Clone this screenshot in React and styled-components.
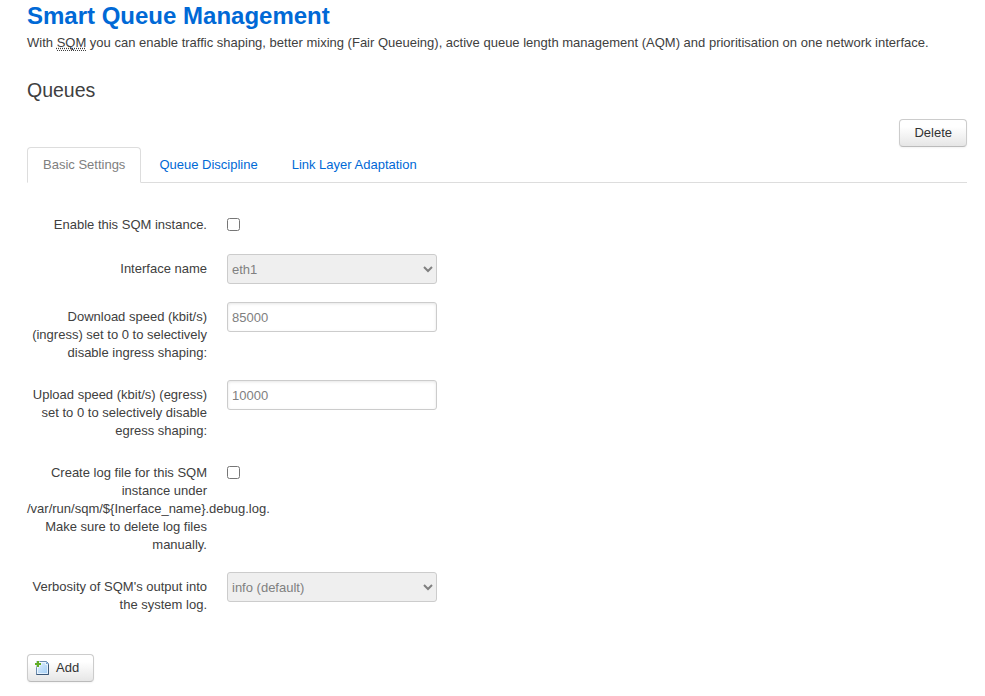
import React from "react";
import styled, { createGlobalStyle } from "styled-components";

const Global = createGlobalStyle`
  * { box-sizing: border-box; }
  body {
    margin: 0;
    background: #fff;
    color: #404040;
    font: 13px/18px "Liberation Sans", Arial, sans-serif;
  }
`;

const Page = styled.main`
  width: 940px;
  margin-left: 27px;
  height: 696px;
  overflow: visible;
`;

const Title = styled.h2`
  margin: 0;
  padding-top: 0;
  font-size: 24px;
  line-height: 32px;
  color: #0069d6;
`;

const Intro = styled.p`
  margin: 2px 0 0;
`;

const Abbr = styled.abbr`
  text-decoration: underline dotted;
  text-decoration-skip-ink: none;
  border-bottom: 1px dotted #404040;
`;

const SectionTitle = styled.h3`
  margin: 20px 0 0;
  font-size: 19.5px;
  font-weight: 400;
  line-height: 36px;
`;

const Actions = styled.div`
  display: flex;
  justify-content: flex-end;
  margin-top: 11px;
`;

const Button = styled.button`
  display: flex;
  align-items: center;
  height: 28px;
  padding: ${(p) => (p.$icon ? "0 14px 0 6px" : "0 14px")};
  gap: 6px;
  border: 1px solid #ccc;
  border-bottom-color: #bbb;
  border-radius: 4px;
  background: linear-gradient(#fff, #fff 25%, #e6e6e6);
  box-shadow: inset 0 1px 0 rgba(255, 255, 255, 0.2), 0 1px 2px rgba(0, 0, 0, 0.05);
  color: #333;
  font: 13px/18px "Liberation Sans", Arial, sans-serif;
`;

const Tabs = styled.nav`
  display: flex;
  height: 36px;
  border-bottom: 1px solid #ddd;
`;

const Tab = styled.a`
  height: 36px;
  padding: 0 15px;
  margin-right: 2px;
  border: 1px solid ${(p) => (p.$active ? "#ddd" : "transparent")};
  border-bottom-color: ${(p) => (p.$active ? "#fff" : "transparent")};
  border-radius: 4px 4px 0 0;
  line-height: 34px;
  color: ${(p) => (p.$active ? "#808080" : "#0069d6")};
`;

const Form = styled.form`
  padding-top: 33px;
`;

const Row = styled.div`
  display: flex;
  align-items: flex-start;
  gap: 20px;
  margin-bottom: ${(p) => p.$gap}px;
`;

const Label = styled.label`
  width: 180px;
  padding-top: ${(p) => p.$top ?? 6}px;
  text-align: right;
`;

const Checkbox = styled.input`
  width: 13px;
  height: 13px;
  margin: 2px 0 0;
`;

const Select = styled.select`
  width: 210px;
  height: 30px;
  padding: 4px 0;
  border: 1px solid #ccc;
  border-radius: 3px;
  background: #efefef;
  color: #808080;
  font: 13px/18px "Liberation Sans", Arial, sans-serif;
`;

const Input = styled.input`
  width: 210px;
  height: 30px;
  padding: 4px;
  border: 1px solid #ccc;
  border-radius: 3px;
  box-shadow: inset 0 1px 3px rgba(0, 0, 0, 0.1);
  color: #808080;
  font: 13px/18px "Liberation Sans", Arial, sans-serif;
`;

const AddIcon = () => (
  <svg width="16" height="16" viewBox="0 0 16 16" fill="none">
    <defs>
      <linearGradient id="sheet" x1="0" y1="0" x2="1" y2="1">
        <stop offset="0" stopColor="#e4f1fd" />
        <stop offset="1" stopColor="#9fccf5" />
      </linearGradient>
    </defs>
    <path d="M2.5 1.5H12.5L14.5 3.5V14.5H2.5Z" fill="url(#sheet)" stroke="#6c8cae" />
    <path d="M14.5 4.5V14.5H2.5" stroke="#3d5878" />
    <path d="M3.5 2.5H11.5V4.5H13.5V13.5H3.5Z" stroke="#fff" strokeOpacity=".65" />
    <path d="M12 2L14 4H12Z" fill="#6c9bcc" />
    <path d="M4 .5v7M.5 4h7" stroke="#fff" strokeOpacity=".8" strokeWidth="3" />
    <path d="M4 1v6M1 4h6" stroke="#62ad25" strokeWidth="2" />
  </svg>
);

export default function App() {
  return (
    <>
      <Global />
      <Page>
        <Title>Smart Queue Management</Title>
        <Intro>
          With <Abbr>SQM</Abbr> you can enable traffic shaping, better mixing (Fair Queueing), active queue
          length management (AQM) and prioritisation on one network interface.
        </Intro>
        <SectionTitle>Queues</SectionTitle>
        <Actions><Button type="button">Delete</Button></Actions>
        <Tabs>
          <Tab $active>Basic Settings</Tab>
          <Tab>Queue Discipline</Tab>
          <Tab>Link Layer Adaptation</Tab>
        </Tabs>
        <Form>
          <Row $gap={20}>
            <Label $top={0}>Enable this SQM instance.</Label>
            <Checkbox type="checkbox" />
          </Row>
          <Row $gap={18}>
            <Label>Interface name</Label>
            <Select><option>eth1</option></Select>
          </Row>
          <Row $gap={18}>
            <Label>Download speed (kbit/s) (ingress) set to 0 to selectively disable ingress shaping:</Label>
            <Input defaultValue="85000" />
          </Row>
          <Row $gap={24}>
            <Label>Upload speed (kbit/s) (egress) set to 0 to selectively disable egress shaping:</Label>
            <Input defaultValue="10000" />
          </Row>
          <Row $gap={18}>
            <Label $top={0}>
              Create log file for this SQM instance under /var/run/sqm/$&#123;Inerface_name&#125;.debug.log. Make
              sure to delete log files manually.
            </Label>
            <Checkbox type="checkbox" />
          </Row>
          <Row $gap={40}>
            <Label>Verbosity of SQM's output into the system log.</Label>
            <Select><option>info (default)</option></Select>
          </Row>
        </Form>
        <Button type="button" $icon><AddIcon />Add</Button>
      </Page>
    </>
  );
}
